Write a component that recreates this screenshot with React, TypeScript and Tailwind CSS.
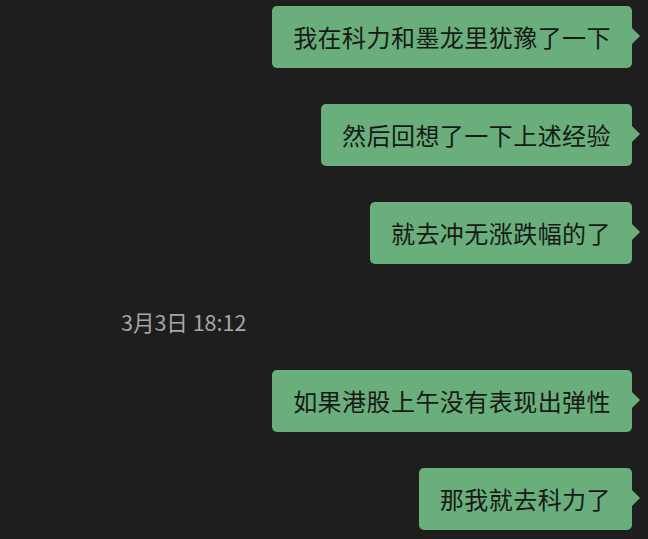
import React from "react";

const Bubble = ({ text, className = "" }: { text: string; className?: string }) => (
  <div className={`relative self-end mr-4 ${className}`}>
    <div className="h-[62px] flex items-center px-[21px] rounded-[5px] bg-[#6aae7b] text-[#161a16] text-[24px] leading-none tracking-[0.45px] whitespace-nowrap">
      {text}
    </div>
    <div className="absolute right-[-8px] top-[22px] w-0 h-0 border-y-[8px] border-y-transparent border-l-[8px] border-l-[#6aae7b]" />
  </div>
);

export default function App() {
  return (
    <div
      className="w-[648px] h-[539px] overflow-hidden bg-[#1e1e1e] flex flex-col pt-[6px]"
      style={{ fontFamily: '"Noto Sans CJK SC", "Noto Sans", sans-serif' }}
    >
      <Bubble text="我在科力和墨龙里犹豫了一下" />
      <Bubble text="然后回想了一下上述经验" className="mt-[36px]" />
      <Bubble text="就去冲无涨跌幅的了" className="mt-[36px]" />
      <div className="mt-[46px] h-[24px] flex items-center pl-[121px] text-[21.5px] leading-none text-[#a6a6a6]">
        3月3日 18:12
      </div>
      <Bubble text="如果港股上午没有表现出弹性" className="mt-[36px]" />
      <Bubble text="那我就去科力了" className="mt-[36px]" />
    </div>
  );
}
